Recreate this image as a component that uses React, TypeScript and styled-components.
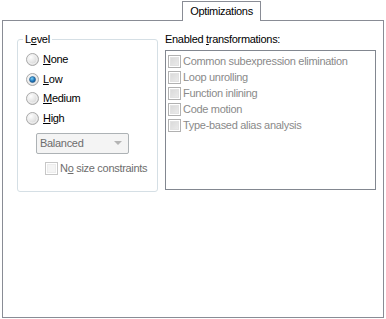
import React, { FC } from 'react';
import styled, { createGlobalStyle } from 'styled-components';

const GlobalStyle = createGlobalStyle`
  html, body {
    margin: 0;
    padding: 0;
    background: #ffffff;
  }
  body {
    font-family: 'Liberation Sans', Arial, sans-serif;
    font-size: 11px;
    letter-spacing: -0.3px;
    color: #000000;
  }
`;

const Page = styled.div`
  width: 386px;
  height: 319px;
  box-sizing: border-box;
  padding: 0 2px;
  background: #ffffff;
`;

const TabStrip = styled.div`
  display: flex;
  height: 20px;
  padding-left: 180px;
`;

const Tab = styled.div`
  position: relative;
  z-index: 1;
  box-sizing: border-box;
  width: 79px;
  height: 20px;
  margin-top: 1px;
  border: 1px solid #898c95;
  border-bottom: none;
  background: #ffffff;
  display: flex;
  align-items: center;
  justify-content: center;
  line-height: 13px;
`;

const Panel = styled.div`
  box-sizing: border-box;
  width: 382px;
  height: 298px;
  border: 1px solid #898c95;
  padding: 12px 0 0 14px;
`;

const Columns = styled.div`
  display: flex;
  align-items: flex-start;
  gap: 7px;
`;

const GroupBox = styled.fieldset`
  box-sizing: border-box;
  width: 141px;
  margin: 0;
  padding: 4px 0 14px 8px;
  border: 1px solid #d5dfe5;
  border-radius: 3px;
  display: flex;
  flex-direction: column;
  align-items: flex-start;
`;

const Legend = styled.legend`
  margin-left: -3px;
  padding: 0 2px;
  line-height: 13px;
`;

const RadioRow = styled.label`
  display: flex;
  align-items: center;
  gap: 4px;
  height: 19.5px;
  line-height: 13px;
`;

const Combo = styled.div`
  box-sizing: border-box;
  width: 93px;
  height: 21px;
  margin: 4.5px 0 0 10px;
  border: 1px solid #adb2b5;
  border-radius: 2px;
  background: #f4f4f4;
  color: #6d6d6d;
  display: flex;
  align-items: center;
  justify-content: space-between;
  padding: 0 6px 0 3px;
`;

const ComboArrow = styled.span`
  width: 0;
  height: 0;
  border-left: 4px solid transparent;
  border-right: 4px solid transparent;
  border-top: 4px solid #b4b4b4;
`;

const CheckRow = styled.label<{ $muted?: string }>`
  display: flex;
  align-items: center;
  gap: 2px;
  height: 16px;
  line-height: 13px;
  color: ${(p) => p.$muted || '#6d6d6d'};
`;

const SizeRow = styled(CheckRow)`
  margin: 7px 0 0 19px;
`;

const RightColumn = styled.div`
  display: flex;
  flex-direction: column;
`;

const Caption = styled.div`
  line-height: 13px;
`;

const ListBox = styled.div`
  box-sizing: border-box;
  width: 211px;
  height: 140px;
  margin-top: 4px;
  border: 1px solid #828790;
  padding: 2px 0 0 2px;
  display: flex;
  flex-direction: column;
`;

const CheckBox = styled.span<{ $light?: boolean }>`
  box-sizing: border-box;
  width: 13px;
  height: 13px;
  flex: none;
  border: 1px solid ${(p) => (p.$light ? '#c7c7c7' : '#b1b1b1')};
  background: #ffffff;
  padding: 1px;
  &::after {
    content: '';
    display: block;
    width: 100%;
    height: 100%;
    background: ${(p) =>
      p.$light ? '#f4f4f4' : 'linear-gradient(135deg, #d8d8d8 0%, #ececec 100%)'};
    box-shadow: inset 0 0 0 1px ${(p) => (p.$light ? '#ececec' : '#e2e2e2')};
  }
`;

const Radio: FC<{ checked?: boolean }> = ({ checked }) => (
  <svg width="13" height="13" viewBox="0 0 13 13" style={{ flex: 'none' }}>
    <defs>
      <radialGradient id="rg" cx="0.35" cy="0.3" r="0.8">
        <stop offset="0" stopColor="#ffffff" />
        <stop offset="1" stopColor="#cfcfcf" />
      </radialGradient>
      <radialGradient id="dot" cx="0.4" cy="0.35" r="0.7">
        <stop offset="0" stopColor="#7fd0f4" />
        <stop offset="0.6" stopColor="#1f79bf" />
        <stop offset="1" stopColor="#0f4f8c" />
      </radialGradient>
    </defs>
    <circle cx="6.5" cy="6.5" r="6" fill="url(#rg)" stroke="#a9a9a9" strokeWidth="1" />
    <circle cx="6.5" cy="6.5" r="4.5" fill="none" stroke="#f2f2f2" strokeWidth="1" />
    {checked && <circle cx="6.5" cy="6.5" r="3" fill="url(#dot)" stroke="#2a5f8c" strokeWidth="0.6" />}
  </svg>
);

const levels = [
  { key: 'N', rest: 'one' },
  { key: 'L', rest: 'ow', checked: true },
  { key: 'M', rest: 'edium' },
  { key: 'H', rest: 'igh' },
];

const transformations = [
  'Common subexpression elimination',
  'Loop unrolling',
  'Function inlining',
  'Code motion',
  'Type-based alias analysis',
];

const App: FC = () => (
  <>
    <GlobalStyle />
    <Page>
      <TabStrip>
        <Tab>Optimizations</Tab>
      </TabStrip>
      <Panel>
        <Columns>
          <GroupBox>
            <Legend>
              L<u>e</u>vel
            </Legend>
            {levels.map((item) => (
              <RadioRow key={item.key}>
                <Radio checked={item.checked} />
                <span>
                  <u>{item.key}</u>
                  {item.rest}
                </span>
              </RadioRow>
            ))}
            <Combo>
              <span>Balanced</span>
              <ComboArrow />
            </Combo>
            <SizeRow>
              <CheckBox $light />
              <span>
                N<u>o</u> size constraints
              </span>
            </SizeRow>
          </GroupBox>
          <RightColumn>
            <Caption>
              Enabled <u>t</u>ransformations:
            </Caption>
            <ListBox>
              {transformations.map((name) => (
                <CheckRow key={name} $muted="#8a8a8a">
                  <CheckBox />
                  <span>{name}</span>
                </CheckRow>
              ))}
            </ListBox>
          </RightColumn>
        </Columns>
      </Panel>
    </Page>
  </>
);

export default App;
